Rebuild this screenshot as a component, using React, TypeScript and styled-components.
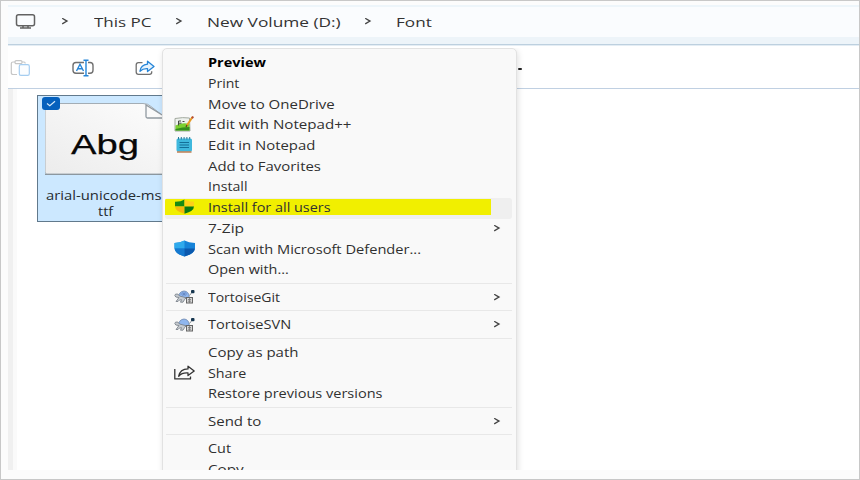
import React from 'react';
import styled, { createGlobalStyle } from 'styled-components';

const GlobalStyle = createGlobalStyle`
  * { box-sizing: border-box; }
  body { margin: 0; background: #fff; font-family: "Open Sans", "Noto Sans", sans-serif; }
`;

const Frame = styled.div`
  position: relative;
  width: 860px;
  height: 480px;
  padding: 4px 0 9px 7px;
  border: 1px solid #c8c8c8;
  background: #fcfcfc;
  overflow: hidden;
`;

const Explorer = styled.div`
  height: 465px;
  display: flex;
  flex-direction: column;
  background: #fff;
  overflow: hidden;
`;

const Breadcrumbs = styled.nav`
  flex: none;
  height: 41px;
  padding: 0 0 7px 7px;
  display: flex;
  align-items: center;
  background: linear-gradient(#edf5fa 0 2px, #fafcfe 2px 32px, #edf4f9 32px 39px, #bdd0df 39px 40px, #e4edf4 40px);
`;

const Stretch = styled.span<{ $x: number }>`
  display: inline-block;
  white-space: nowrap;
  transform: scaleX(${(p) => p.$x});
  transform-origin: 0 50%;
`;

const Crumb = styled.div<{ $width: number }>`
  width: ${(p) => p.$width}px;
  font-size: 13.5px;
  line-height: 20px;
  color: #333;
`;

const Arrow = styled.svg`
  display: block;
  flex: none;
  fill: none;
  stroke: #444;
  stroke-width: 1.3;
`;

const CrumbArrow = styled.div<{ $before: number; $after: number }>`
  margin: 0 ${(p) => p.$after}px 0 ${(p) => p.$before}px;
`;

const Toolbar = styled.div`
  flex: none;
  height: 43px;
  padding: 1px 0 0 2px;
  display: flex;
  align-items: center;
  border-bottom: 1px solid #c0d0e2;
`;

const Tool = styled.div<{ $width: number }>`
  width: ${(p) => p.$width}px;
  svg { display: block; }
`;

const MoreDot = styled.div`
  width: 4px;
  height: 2px;
  margin: 2px 0 0 323px;
  border-radius: 1px;
  background: #222;
`;

const Content = styled.div`
  flex: 1;
  display: flex;
  align-items: flex-start;
  padding: 6px 0 0 29px;
  background: linear-gradient(90deg, #f0f0f0 0 5px, #fafafa 5px 9px, #fff 9px);
`;

const FileTile = styled.div`
  position: relative;
  width: 140px;
  height: 127px;
  padding: 6px 0 0 7px;
  border: 1px solid #61798c;
  background: #cce8ff;
  svg { display: block; }
`;

const FileName = styled.div`
  margin-top: 12px;
  font-size: 12px;
  line-height: 15.5px;
  color: #252b30;
`;

const NameLine = styled.div<{ $indent: number }>`
  padding-left: ${(p) => p.$indent}px;
`;

const Check = styled.div`
  position: absolute;
  left: 4px;
  top: 1px;
  width: 18px;
  height: 13px;
  border-radius: 3px;
  background: #0560bd;
`;

const MenuViewport = styled.div`
  position: absolute;
  left: 151px;
  top: 47px;
  width: 375px;
  height: 422px;
  padding: 0 10px;
  overflow: hidden;
`;

const Menu = styled.div`
  width: 355px;
  height: 450px;
  padding: 4px 4px 4px 2px;
  border: 1px solid #e2e2e2;
  border-radius: 5px;
  background: #f9f9f9;
  box-shadow: 1px 2px 6px rgba(0, 0, 0, 0.13);
`;

const Row = styled.div<{ $marked?: boolean }>`
  height: 20.7px;
  padding: 0 11px 0 9px;
  display: flex;
  align-items: center;
  border-radius: 3px;
  background: ${(p) =>
    p.$marked
      ? 'linear-gradient(90deg, #f1ef00 0 326px, transparent 326px) 0 1px / 100% 16px no-repeat, #efefef'
      : 'transparent'};
`;

const IconCell = styled.div`
  width: 34px;
  svg { display: block; overflow: visible; margin-top: -2px; }
`;

const Label = styled.div<{ $bold?: boolean }>`
  flex: 1;
  font-size: 12px;
  line-height: 20px;
  font-weight: ${(p) => (p.$bold ? 700 : 400)};
  color: ${(p) => (p.$bold ? '#000' : '#303030')};
`;

const Separator = styled.div`
  height: 1px;
  margin: 2px 0 3.9px 1px;
  background: #e8e8e8;
`;

const Chevron = ({ size = 8 }: { size?: number }) => (
  <Arrow width={size} height={size} viewBox="0 0 8 8">
    <path d="M1.2 0.3 6 3.100 1.2 5.900" />
  </Arrow>
);

const MonitorIcon = () => (
  <svg width="21" height="16" viewBox="0 0 21 16" fill="none" stroke="#626262" strokeWidth="1.5">
    <rect x="1.5" y="0.8" width="18" height="11" rx="2" />
    <path d="M8 12v1.700M13 12v1.700M5 14h11" />
  </svg>
);

const PasteIcon = () => (
  <svg width="20" height="18" viewBox="0 0 20 18" fill="none" strokeWidth="1.2">
    <path d="M7 15.5H3q-1.7 0-1.7-1.7V4.5Q1.3 3 3 3h2.2M12 3h2q1.2 0 1.2 1.5" stroke="#c6c6c6" />
    <rect x="5" y="1.6" width="7" height="3" rx="1.2" stroke="#c6c6c6" />
    <rect x="9.3" y="5.7" width="10" height="10.6" rx="1.6" fill="#fbfdff" stroke="#a5cdf0" />
  </svg>
);

const RenameIcon = () => (
  <svg width="22" height="18" viewBox="0 0 22 18" fill="none" strokeWidth="1.4">
    <path d="M12 14.3H4q-3-.2-3-3V6.5q0-3 3-3h8M16 3.5h2q3 0 3 3v4.8q0 2.8-3 3h-2" stroke="#707070" />
    <path d="M14 1.5v15M11.5 1.2h5M11.5 16.8h5M4.5 12 8 5.2l3.5 6.8M5.8 9.8h4.5" stroke="#2585d8" />
  </svg>
);

const ShareToolIcon = () => (
  <svg width="20" height="16" viewBox="0 0 20 16" fill="none" strokeWidth="1.3" strokeLinejoin="round">
    <path d="M7.5 2.7H3.4Q1.2 2.7 1.2 5v7q0 2.3 2.3 2.3h11q2.2 0 2.2-2v-1" stroke="#707070" />
    <path d="M12.5 1.2 19 6.5l-6.5 5V8.6Q8 8.3 5 11.2q.8-6.3 7.5-7z" fill="#e6f3fd" stroke="#2585d8" />
  </svg>
);

const FontThumb = () => (
  <svg width="132" height="74" viewBox="0 0 132 74">
    <defs>
      <linearGradient id="sheet" x1="0" y1="1" x2="1" y2="0">
        <stop offset="0" stopColor="#ececec" />
        <stop offset="1" stopColor="#fdfdfd" />
      </linearGradient>
    </defs>
    <path d="M2 1.5h96q5 0 8 3l22 17v50.5H2q-2 0-2-2v-66.5q0-2 2-2z" fill="url(#sheet)" stroke="#a3adb5" />
    <path d="M0 72.5h130" stroke="#8c979f" />
    <path d="M101 3v11.5q0 1.5 1.5 1.5H122z" fill="#fafafa" stroke="#919aa1" strokeWidth="1.3" />
    <text x="26" y="52" fontFamily="Liberation Sans" fontSize="28.5" textLength="68" lengthAdjust="spacingAndGlyphs" fill="#080808" stroke="#080808" strokeWidth=".25">Abg</text>
  </svg>
);

const NotepadPlusIcon = () => (
  <svg width="20" height="16" viewBox="0 0 20 16">
    <path d="M1 2.5q8-1.5 14.5-.5L16 15H1z" fill="#eef2ee" stroke="#a3aaa0" />
    <path d="M1.5 9.5q7-3.5 14-1.5v6.5h-14z" fill="#7bd030" />
    <path d="M1.5 13q7-2 14-2v3.5h-14z" fill="#338f1c" />
    <path d="M4.5 5v4.5M4.5 5H7M8.5 5.5h2M4.5 7.2h3" stroke="#464d43" fill="none" />
    <path d="m18.5 1-6 9" stroke="#e89b24" strokeWidth="2" />
    <path d="m19.2.5-1.2 1.8" stroke="#b34b35" strokeWidth="2" />
    <path d="m13 9-1 2" stroke="#564229" strokeWidth="1.2" />
  </svg>
);

const NotepadIcon = () => (
  <svg width="20" height="16" viewBox="0 0 20 16">
    <rect x="2.5" y="1.5" width="15.5" height="13" rx="1.5" fill="#3fb8dd" />
    <path d="M3 15h14.5" stroke="#b66c3c" strokeWidth="1.3" />
    <path d="M4.5 0v2.5M7.3 0v2.5M10.1 0v2.5M12.9 0v2.5M15.7 0v2.5" stroke="#277999" />
    <path d="M5.5 5.5H15M5.5 8H15M5.5 10.5H15" stroke="#146f98" strokeWidth="1.2" />
  </svg>
);

const UacShieldIcon = () => (
  <svg width="20" height="16" viewBox="0 0 20 16">
    <defs>
      <clipPath id="uac">
        <path d="M10.5.5Q14 2.8 20 2.7v4.5q0 5-9.500 7.500Q1 12.2 1 7.200V2.700Q7 2.8 10.500.5z" />
      </clipPath>
    </defs>
    <g clipPath="url(#uac)">
      <path d="M0 0h10.5v7.5H0z" fill="#178b14" />
      <path d="M10.5 0H20v7.5h-9.5z" fill="#ffd018" />
      <path d="M0 7.5h10.5V16H0z" fill="#f5b80c" />
      <path d="M10.5 7.5H20V16h-9.5z" fill="#0c7914" />
    </g>
  </svg>
);

const DefenderIcon = () => (
  <svg width="21" height="17" viewBox="0 0 21 17">
    <path d="M10.5.5Q14.500 2.900 21 3v5q0 5.500-10.500 8.500Q.5 13.500.5 8V3q6-.1 10-2.500z" fill="#1683d8" />
    <path d="M10.500.5v8H.5V3q6-.1 10-2.500z" fill="#2faaec" />
    <path d="M.5 8.500h10v8q-9.500-3-10-8z" fill="#1579cf" />
    <path d="M10.500 8.500H21q-.5 5-10.500 8z" fill="#0b59ae" />
  </svg>
);

const TortoiseIcon = ({ git }: { git?: boolean }) => (
  <svg width="21" height="15" viewBox="0 0 21 15">
    <path d="M4.5 8q.5-5.500 5.500-6 4.500.3 5.300 5.500l-3 2z" fill="#8fb6ee" stroke="#6c86ad" strokeWidth=".8" />
    <path d="M5 8.500q-4.200 0-4.200-2t3-1.500l1.700 2 6.500 1.700-1.500 2-1.500 2.500H6.500l1-2.500-2 .3-1.500 1.500H2z" fill="#c6cbd0" stroke="#737b84" strokeWidth=".8" />
    {git && <path d="M6.500 5H13M8.500 3l3 4M11.500 3l-3 4" stroke="#5e80b9" strokeWidth=".7" />}
    <rect x="12.500" y="8.500" width="6" height="5.500" fill="#d6d6d6" stroke="#666" strokeWidth="1" />
    <path d="M14 10.500h3M14 12.200h3M15.500 9v5" stroke="#777" strokeWidth=".8" />
    <rect x="17" y="1" width="3.500" height="3.200" rx="1" fill="#16364f" />
    <path d="m17.500 4-2 2.500" stroke="#8a9299" />
  </svg>
);

const ShareIcon = () => (
  <svg width="21" height="15" viewBox="0 0 21 15" fill="none" stroke="#333" strokeWidth="1.3" strokeLinejoin="round">
    <path d="M.8 4v9.900h15.700v-2.400" />
    <path d="M14 1.200 20.200 6 14 10.600V8Q8 7.500 4.700 11.200 6 4.200 14 3.900z" />
  </svg>
);

type Entry =
  | 'separator'
  | { text: string; x: number; icon?: React.ReactNode; sub?: boolean; bold?: boolean; marked?: boolean };

const entries: Entry[] = [
  { text: 'Preview', x: 1.21, bold: true },
  { text: 'Print', x: 1.17 },
  { text: 'Move to OneDrive', x: 1.25 },
  { text: 'Edit with Notepad++', x: 1.26, icon: <NotepadPlusIcon /> },
  { text: 'Edit in Notepad', x: 1.24, icon: <NotepadIcon /> },
  { text: 'Add to Favorites', x: 1.245 },
  { text: 'Install', x: 1.18 },
  { text: 'Install for all users', x: 1.2, icon: <UacShieldIcon />, marked: true },
  { text: '7-Zip', x: 1.29, sub: true },
  { text: 'Scan with Microsoft Defender...', x: 1.22, icon: <DefenderIcon /> },
  { text: 'Open with...', x: 1.2 },
  'separator',
  { text: 'TortoiseGit', x: 1.165, icon: <TortoiseIcon git />, sub: true },
  'separator',
  { text: 'TortoiseSVN', x: 1.215, icon: <TortoiseIcon />, sub: true },
  'separator',
  { text: 'Copy as path', x: 1.25 },
  { text: 'Share', x: 1.19, icon: <ShareIcon /> },
  { text: 'Restore previous versions', x: 1.21 },
  'separator',
  { text: 'Send to', x: 1.25, sub: true },
  'separator',
  { text: 'Cut', x: 1.2 },
  { text: 'Copy', x: 1.27 },
];

export default function App() {
  return (
    <>
      <GlobalStyle />
      <Frame>
        <Explorer>
          <Breadcrumbs>
            <MonitorIcon />
            <CrumbArrow $before={25} $after={25}><Chevron /></CrumbArrow>
            <Crumb $width={59}><Stretch $x={1.26}>This PC</Stretch></Crumb>
            <CrumbArrow $before={22} $after={24}><Chevron /></CrumbArrow>
            <Crumb $width={134}><Stretch $x={1.28}>New Volume (D:)</Stretch></Crumb>
            <CrumbArrow $before={23} $after={24}><Chevron /></CrumbArrow>
            <Crumb $width={40}><Stretch $x={1.27}>Font</Stretch></Crumb>
          </Breadcrumbs>
          <Toolbar>
            <Tool $width={62}><PasteIcon /></Tool>
            <Tool $width={63}><RenameIcon /></Tool>
            <Tool $width={60}><ShareToolIcon /></Tool>
            <MoreDot />
          </Toolbar>
          <Content>
            <FileTile>
              <FontThumb />
              <FileName>
                <NameLine $indent={1}><Stretch $x={1.235}>arial-unicode-ms.</Stretch></NameLine>
                <NameLine $indent={53}><Stretch $x={1.2}>ttf</Stretch></NameLine>
              </FileName>
              <Check>
                <svg width="18" height="13" viewBox="0 0 18 13" fill="none" stroke="#d3e8fa" strokeWidth="1.2">
                  <path d="m5 6.5 2.8 2.2L13 4.2" />
                </svg>
              </Check>
            </FileTile>
          </Content>
        </Explorer>
        <MenuViewport>
          <Menu>
            {entries.map((e, i) =>
              e === 'separator' ? (
                <Separator key={i} />
              ) : (
                <Row key={i} $marked={e.marked}>
                  <IconCell>{e.icon}</IconCell>
                  <Label $bold={e.bold}><Stretch $x={e.x}>{e.text}</Stretch></Label>
                  {e.sub && <Chevron />}
                </Row>
              ),
            )}
          </Menu>
        </MenuViewport>
      </Frame>
    </>
  );
}
